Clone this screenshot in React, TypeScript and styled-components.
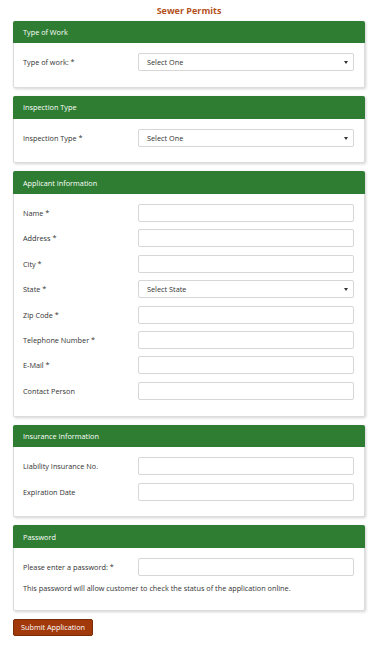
import React from "react";
import styled, { createGlobalStyle } from "styled-components";

const Global = createGlobalStyle`
  html, body { margin: 0; padding: 0; background: #fff; }
  body { font-family: "Open Sans", "Noto Sans", sans-serif; color: #333; }
  * { box-sizing: border-box; }
`;

const Page = styled.div`
  width: 383px;
  padding: 5px 18px 0 13px;
`;

const Title = styled.h1`
  margin: 0 0 4.7px;
  height: 11px;
  line-height: 11px;
  text-align: center;
  font-size: 9px;
  font-weight: 700;
  color: #b4521c;
`;

const Panel = styled.section`
  border: 1px solid #dcdcdc;
  border-top: none;
  border-radius: 2px;
  box-shadow: 1px 1px 3px rgba(0, 0, 0, 0.18);
  margin-bottom: 8px;
  background: #fff;
`;

const PanelHeader = styled.div`
  height: 22.6px;
  background: #2e7d32;
  color: #fff;
  font-size: 7.3px;
  display: flex;
  align-items: center;
  padding-left: 10px;
  margin: 0 -1px;
  border-radius: 2px 2px 0 0;
`;

const PanelBody = styled.div`
  padding: 10px 10px 8.4px 9px;
`;

const Row = styled.div`
  display: grid;
  grid-template-columns: 115px 1fr;
  align-items: center;
  height: 18px;
  margin-bottom: 7.4px;
`;

const Label = styled.label`
  font-size: 7.3px;
  line-height: 10px;
  color: #333;
`;

const Input = styled.div`
  height: 18px;
  border: 1px solid #d6d6d6;
  border-radius: 2px;
  background: #fff;
`;

const Select = styled(Input)`
  display: flex;
  align-items: center;
  justify-content: space-between;
  padding: 0 5px 0 8px;
  font-size: 7.3px;
  color: #333;
`;

const Arrow = styled.span`
  width: 0;
  height: 0;
  margin-top: 1px;
  border-left: 2.5px solid transparent;
  border-right: 2.5px solid transparent;
  border-top: 3.5px solid #333;
`;

const Help = styled.p`
  margin: 0 0 7.4px;
  font-size: 7.3px;
  line-height: 11px;
  color: #333;
`;

const Button = styled.button`
  display: block;
  height: 16.7px;
  width: 80px;
  padding: 0;
  border: 1px solid #7a2c06;
  border-radius: 2px;
  background: #a1390b;
  color: #fff;
  font-family: inherit;
  font-size: 7.3px;
`;

type Field = { label: string; select?: string };

const sections: { title: string; fields: Field[]; help?: string }[] = [
  { title: "Type of Work", fields: [{ label: "Type of work: *", select: "Select One" }] },
  { title: "Inspection Type", fields: [{ label: "Inspection Type *", select: "Select One" }] },
  {
    title: "Applicant Information",
    fields: [
      { label: "Name *" },
      { label: "Address *" },
      { label: "City *" },
      { label: "State *", select: "Select State" },
      { label: "Zip Code *" },
      { label: "Telephone Number *" },
      { label: "E-Mail *" },
      { label: "Contact Person" },
    ],
  },
  {
    title: "Insurance Information",
    fields: [{ label: "Liability Insurance No." }, { label: "Expiration Date" }],
  },
  {
    title: "Password",
    fields: [{ label: "Please enter a password: *" }],
    help: "This password will allow customer to check the status of the application online.",
  },
];

export default function App() {
  return (
    <Page>
      <Global />
      <Title>Sewer Permits</Title>
      {sections.map((s) => (
        <Panel key={s.title}>
          <PanelHeader>{s.title}</PanelHeader>
          <PanelBody>
            {s.fields.map((f) => (
              <Row key={f.label}>
                <Label>{f.label}</Label>
                {f.select ? (
                  <Select>
                    {f.select}
                    <Arrow />
                  </Select>
                ) : (
                  <Input />
                )}
              </Row>
            ))}
            {s.help && <Help>{s.help}</Help>}
          </PanelBody>
        </Panel>
      ))}
      <Button>Submit Application</Button>
    </Page>
  );
}
